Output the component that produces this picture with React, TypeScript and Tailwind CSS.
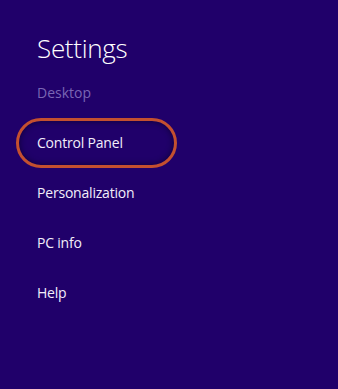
import React from 'react';

const items = ['Control Panel', 'Personalization', 'PC info', 'Help'];

export default function App() {
    return (
        <div className="w-[338px] h-[389px] bg-[#20006a] pl-[37px] pt-[32px] font-['Open_Sans',sans-serif] text-white">
            <h1 className="text-[26px] font-light leading-[32px] tracking-[-0.3px]">Settings</h1>
            <div className="mt-[19px] text-[14px] leading-[20px] text-[#7a66b4]">Desktop</div>
            <div className="mt-[30px] flex flex-col gap-[30px]">
                {items.map((label, i) => (
                    <div key={label} className="relative text-[14px] leading-[20px] tracking-[-0.2px] text-[#f2eefa]">
                        {i === 0 && (
                            <span className="absolute left-[-21px] top-[-15px] w-[161px] h-[50px] rounded-full border-[3px] border-[#c4502f] shadow-[inset_0_0_6px_rgba(10,0,40,0.8)]" />
                        )}
                        <span className="relative">{label}</span>
                    </div>
                ))}
            </div>
        </div>
    );
}
